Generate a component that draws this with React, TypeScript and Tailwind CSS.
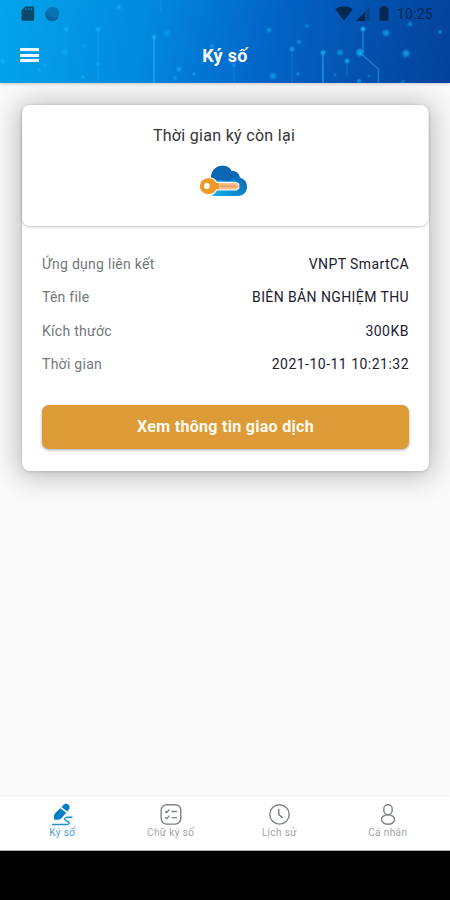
import clsx from 'clsx'

const DETAILS = [
  { label: 'Ứng dụng liên kết', value: 'VNPT SmartCA', labelClass: 'tracking-[0.28px]', valueClass: 'tracking-[0.4px]' },
  { label: 'Tên file', value: 'BIÊN BẢN NGHIỆM THU', labelClass: 'tracking-[0.25px]', valueClass: 'tracking-[0.4px]' },
  { label: 'Kích thước', value: '300KB', labelClass: 'tracking-[0.28px]', valueClass: 'tracking-[0.5px]' },
  { label: 'Thời gian', value: '2021-10-11 10:21:32', labelClass: 'tracking-[0.28px]', valueClass: 'tracking-[0.48px]' },
]

const TABS = [
  { label: 'Ký số', icon: SignIcon, active: true },
  { label: 'Chữ ký số', icon: ChecklistIcon, active: false },
  { label: 'Lịch sử', icon: ClockIcon, active: false },
  { label: 'Cá nhân', icon: PersonIcon, active: false },
]

// [x, y, radius, opacity]
const DOTS = [
  [66, 29, 2.2, 0.9], [98, 29, 2.2, 0.9], [119, 7, 2.6, 0.5], [154, 37, 2.2, 0.9],
  [167, 33, 3, 0.4], [84, 46, 2.6, 0.35], [65, 52, 2.8, 0.5], [3, 61, 2.5, 0.5],
  [45, 65, 2, 0.6], [39, 70, 2, 0.6], [98, 64, 2, 0.6], [83, 77, 1.8, 0.6],
  [179, 69, 2.2, 0.7], [194, 74, 1.6, 0.6], [175, 78, 1.8, 0.5], [212, 46, 2, 0.5],
  [269, 30, 2.2, 0.55], [307, 26, 2, 0.4], [299, 42, 2, 0.5], [292, 49, 2.2, 0.7],
  [323, 52.5, 2.2, 0.9], [340, 52.5, 2.8, 0.6], [347, 61, 2.2, 0.9], [360, 52.5, 3.3, 0.9],
  [363, 29, 2.2, 1], [386, 33, 3, 0.7], [406, 53.5, 3.3, 0.75], [440, 32, 1.8, 0.6],
  [410, 24, 2.2, 0.5], [273, 76, 3, 0.6], [298, 74, 1.7, 0.5], [359, 81, 2, 0.6],
  [335, 75, 1.4, 0.4], [369, 76, 1.4, 0.4], [234, 65, 2, 0.5], [403, 82, 2, 0.4],
]

function CircuitPattern() {
  return (
    <svg className="absolute inset-0" width="450" height="83" viewBox="0 0 450 83" fill="none">
      <defs>
        <radialGradient id="glow">
          <stop offset="0" stopColor="#16bbf8" />
          <stop offset="0.45" stopColor="#14aff2" stopOpacity="0.8" />
          <stop offset="1" stopColor="#14aff2" stopOpacity="0" />
        </radialGradient>
      </defs>
      <g stroke="#1cb0f2" strokeWidth="1.2">
        <path d="M66 29v34M98 29v54" opacity="0.3" />
        <path d="M154 37v46" opacity="0.6" strokeWidth="2" />
        <path d="M292 49v34M347 61v16M234 65v18M161 0v12" opacity="0.3" />
        <path d="M323 53v30" opacity="0.6" strokeWidth="1.6" />
        <path d="M363 29v23M360 53l18.500 16v14" opacity="0.5" strokeWidth="1.5" />
      </g>
      {DOTS.map(([x, y, r, opacity]) => (
        <circle key={`${x}-${y}`} cx={x} cy={y} r={r * 1.5} fill="url(#glow)" opacity={opacity} />
      ))}
    </svg>
  )
}

function StatusBar() {
  return (
    <div className="relative flex h-[27px] items-center pl-[21px] pr-4">
      <svg width="14" height="15" viewBox="0 0 14 15" className="text-[#074a68]">
        <path d="M4.300.500H12a1.200 1.200 0 0 1 1.200 1.200v11.800a1.200 1.200 0 0 1-1.200 1.200H1.700A1.200 1.200 0 0 1 .500 13.500V4.500z" fill="currentColor" />
        <path d="M5 2.200v2M7.700 2.200v2M10.400 2.200v2" stroke="#087fbd" strokeWidth="1.400" />
      </svg>
      <svg width="15" height="15" viewBox="0 0 15 15" className="ml-[10px]">
        <circle cx="7.500" cy="7.500" r="6.800" fill="#0873b4" />
        <path d="M1 5.500a6.800 6.800 0 1 0 12.500 5.300C8 13 4 10 1 5.500z" fill="#07659c" />
      </svg>
      <div className="ml-auto flex items-center text-[#06274f]">
        <svg width="18" height="15" viewBox="0 0 18 15">
          <path d="M.300 3.200C5-.700 13-.700 17.700 3.200L9 14.500z" fill="currentColor" />
        </svg>
        <svg width="14" height="14" viewBox="0 0 14 14" className="ml-[3px]">
          <path d="M14 0v14H0z" fill="#07458a" />
          <path d="M9 5V14H0z" fill="currentColor" />
        </svg>
        <svg width="10" height="15" viewBox="0 0 10 15" className="ml-[9px]">
          <path d="M3 0h4v1.500h1.200A1.200 1.200 0 0 1 9.400 2.700v11a1 1 0 0 1-1 1H1.600a1 1 0 0 1-1-1v-11a1.200 1.200 0 0 1 1.200-1.200H3z" fill="currentColor" />
        </svg>
        <span className="ml-[8px] w-[37px] text-[14px] leading-none tracking-[0.2px]">10:25</span>
      </div>
    </div>
  )
}

function CloudKeyLogo() {
  return (
    <svg width="48" height="34" viewBox="0 0 48 34">
      <defs>
        <linearGradient id="cloud" x1="0" y1="1" x2="1" y2="0.300">
          <stop offset="0" stopColor="#19b4ee" />
          <stop offset="0.500" stopColor="#0a8ccf" />
          <stop offset="1" stopColor="#0965ae" />
        </linearGradient>
      </defs>
      <path d="M12 33l5-6-6-12C11 7.500 16 2.700 22.500 2.700c4.300 0 7.500 2 9 5.300 4.500-.300 7.700 2.500 8.300 6.500 4.700 1.500 7.200 4.900 7.200 9.200 0 5.300-4 9.300-9.200 9.300z" fill="url(#cloud)" />
      <path d="M11 16.500C10.500 8 16 2.700 22.500 2.700c4.300 0 7.500 2 9 5.300 4.500-.300 7.700 2.500 8.300 6.500-3.800-.8-7.300.300-9.800 3.500z" fill="#0b67b3" />
      <path
        d="M9 14.300c3.600 0 6.300 1.500 8 4.400h19l3.300 2v5l-3 1.800H17c-1.700 3-4.400 4.500-8 4.500a8.800 8.800 0 1 1 0-17.700z"
        fill="#fff"
      />
      <path d="M8.800 15.200c3.500 0 6 1.600 7.500 4.800H36l2.300 1.500v3.300L36 26.200H16.300c-1.500 3.200-4 4.900-7.500 4.900a8 8 0 1 1 0-15.900z" fill="#ee9a28" />
      <path d="M19 20h17l2.300 1.500v3.300L36 26.200H19z" fill="#f9c28f" />
      <path d="M20 24l2-1.800 2 1.800 2-1.800 2 1.800 2-1.800 2 1.800 2-1.800 2 1.800" stroke="#ec9a5c" strokeWidth="1.300" fill="none" />
      <circle cx="6.800" cy="23" r="2.900" fill="#fff" />
    </svg>
  )
}

function SignIcon() {
  return (
    <svg width="22" height="24" viewBox="0 0 22 24" fill="none">
      <path d="M12 3.400c1.300-1.700 3.700-2.100 5.300-.8s1.800 3.500.500 5.100l-1.600 1.900-5.800-4.500z" fill="#087fc3" />
      <path d="M9.400 6.200l5.800 4.600-4.500 5.100c-1.900 2-4.700 2-7.600 1.500-.600-2.800-.100-5.300 1.700-7z" fill="#087fc3" />
      <path d="M1.500 22.500h14c3.300 0 3.500-2 1.200-3l-1.700-.8c-2.300-1.200-1.500-3.500 1.400-3.500H21" stroke="#2491ce" strokeWidth="1.400" strokeLinecap="round" />
    </svg>
  )
}

function ChecklistIcon() {
  return (
    <svg width="22" height="24" viewBox="0 0 22 24" fill="none" stroke="#7e8388" strokeWidth="1.400" strokeLinecap="round">
      <rect x="1.200" y="2.700" width="19.600" height="19.400" rx="5.500" />
      <path d="M5.500 9.500l1.200 1L9 8M5.500 15.600l1.200 1L9 14.100M12 9.500h4.500M12 15.600h4.500" />
    </svg>
  )
}

function ClockIcon() {
  return (
    <svg width="22" height="24" viewBox="0 0 22 24" fill="none" stroke="#7e8388" strokeWidth="1.400" strokeLinecap="round">
      <circle cx="11.500" cy="12.400" r="9.700" />
      <path d="M10.700 7.500v5l3.700 3" strokeWidth="1.600" />
    </svg>
  )
}

function PersonIcon() {
  return (
    <svg width="22" height="24" viewBox="0 0 22 24" fill="none" stroke="#7e8388" strokeWidth="1.400">
      <rect x="6.800" y="2.700" width="8.400" height="10" rx="4.100" />
      <ellipse cx="11" cy="17.500" rx="6.500" ry="4.700" />
    </svg>
  )
}

export default function App() {
  return (
    <div className="flex h-[900px] w-[450px] flex-col overflow-hidden bg-[#fafafa] font-['Roboto','Noto_Sans',sans-serif]">
      {/* Header */}
      <header className="relative z-10 h-[83px] shrink-0 bg-linear-[100deg,#04a5ea_0%,#0289e0_32%,#0266c9_58%,#0453b0_78%,#03429b_100%] shadow-[0_1px_3px_rgba(0,0,0,0.2)]">
        <CircuitPattern />
        <StatusBar />
        <div className="relative grid h-14 grid-cols-[1fr_auto_1fr] items-center px-5">
          <button className="flex w-[19px] flex-col gap-[2.500px]" aria-label="Menu">
            <span className="h-[3px] w-full bg-[#f1faff]" />
            <span className="h-[3px] w-full bg-[#f1faff]" />
            <span className="h-[3px] w-full bg-[#f1faff]" />
          </button>
          <h1 className="text-[18px] font-bold tracking-[0.3px] text-white">Ký số</h1>
        </div>
      </header>

      {/* Transaction card */}
      <main className="flex-1 pl-[22px] pr-[21px] pt-[22px]">
        <section className="h-[366px] rounded-[8px] bg-white shadow-[0_2px_28px_4px_rgba(0,0,0,0.25),0_1px_3px_rgba(0,0,0,0.15)]">
          <div className="mr-px flex h-[121px] flex-col items-center rounded-[8px] bg-white pr-[2px] pt-[19px] shadow-[0_1px_3px_rgba(0,0,0,0.25)]">
            <p className="text-[16px] leading-6 tracking-[0.3px] text-[#353535]">Thời gian ký còn lại</p>
            <div className="mt-[15px]">
              <CloudKeyLogo />
            </div>
          </div>
          <dl className="mt-[22px] px-5">
            {DETAILS.map(row => (
              <div key={row.label} className="flex h-[33.300px] items-center justify-between text-[14px]">
                <dt className={clsx('text-[#73777b]', row.labelClass)}>{row.label}</dt>
                <dd className={clsx('text-[#20202f]', row.valueClass)}>{row.value}</dd>
              </div>
            ))}
          </dl>
          <div className="px-5 pt-6">
            <button className="h-[44px] w-full rounded-[7px] bg-[#dc9b37] text-[16px] font-bold tracking-[0.3px] text-[#fffaf0] shadow-[0_1px_3px_rgba(0,0,0,0.35)]">
              Xem thông tin giao dịch
            </button>
          </div>
        </section>
      </main>

      {/* Bottom tabs */}
      <nav className="flex h-[54px] shrink-0 border-b border-[#aaa] bg-white px-2 pt-[5px] shadow-[0_-1px_5px_rgba(0,0,0,0.03)]">
        {TABS.map(({ label, icon: Icon, active }) => (
          <a key={label} className="flex flex-1 flex-col items-center">
            <Icon />
            <span className={clsx('text-[10px] leading-[13px] tracking-[0.4px]', active ? 'text-[#4aa0d4]' : 'text-[#a1a4a7]')}>
              {label}
            </span>
          </a>
        ))}
      </nav>
      <div className="h-[49px] shrink-0 bg-black" />
    </div>
  )
}
